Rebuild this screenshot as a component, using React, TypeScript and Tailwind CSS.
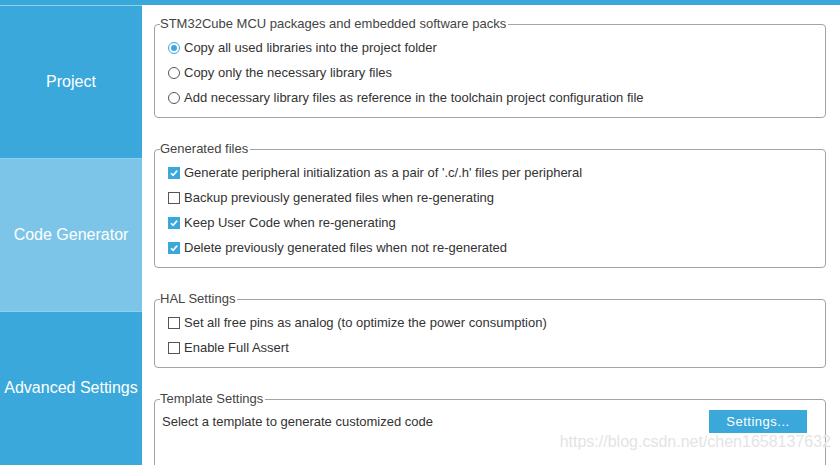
import React from "react";

const Radio = ({ checked }: { checked?: boolean }) => (
  <span
    className={`flex items-center justify-center w-[12px] h-[12px] rounded-full border bg-white ${
      checked ? "border-[#3aa8db]" : "border-[#555]"
    }`}
  >
    {checked && <span className="w-[6px] h-[6px] rounded-full bg-[#3aa8db]" />}
  </span>
);

const Check = ({ checked }: { checked?: boolean }) =>
  checked ? (
    <span className="flex items-center justify-center w-[12px] h-[12px] bg-[#3aa8db]">
      <svg width="10" height="10" viewBox="0 0 10 10">
        <path d="M2 5.2 L4.1 7.3 L8.2 2.6" fill="none" stroke="white" strokeWidth="1.6" />
      </svg>
    </span>
  ) : (
    <span className="w-[12px] h-[12px] border border-[#555] bg-white" />
  );

const Row = ({ control, label }: { control: React.ReactNode; label: string }) => (
  <div className="flex items-center h-[25px] pl-[8px] gap-[4px]">
    {control}
    <span>{label}</span>
  </div>
);

const Group = ({ title, children, last }: { title: string; children: React.ReactNode; last?: boolean }) => (
  <fieldset
    className={`border border-[#a3a3a3] rounded-[4px] pl-[5px] pr-0 pt-[3px] ${
      last ? "pb-[40px]" : "pb-[7px] mb-[23px]"
    }`}
  >
    <legend className="px-0 pr-[2px] text-[#444] leading-[16px]">{title}</legend>
    {children}
  </fieldset>
);

const Tab = ({ label, active }: { label: string; active?: boolean }) => (
  <div
    className={`flex items-center justify-center h-[153px] border-t border-[#8fd0ef] text-white text-[16px] ${
      active ? "bg-[#7cc5e8]" : "bg-[#3aa8db]"
    }`}
  >
    {label}
  </div>
);

export default function App() {
  return (
    <div
      className="relative w-[840px] h-[465px] overflow-hidden bg-white"
      style={{ fontFamily: '"Liberation Sans", Arial, sans-serif' }}
    >
      <div className="h-[5px] bg-[#3aa8db]" />
      <div className="flex h-[460px]">
        <div className="w-[142px] shrink-0 flex flex-col bg-[#3aa8db]">
          <Tab label="Project" />
          <Tab label="Code Generator" active />
          <Tab label="Advanced Settings" />
        </div>
        <div className="flex-1 pl-[12px] pr-[14px] pt-[11px] text-[13px] text-[#333]">
          <Group title="STM32Cube MCU packages and embedded software packs">
            <Row control={<Radio checked />} label="Copy all used libraries into the project folder" />
            <Row control={<Radio />} label="Copy only the necessary library files" />
            <Row
              control={<Radio />}
              label="Add necessary library files as reference in the toolchain project configuration file"
            />
          </Group>
          <Group title="Generated files">
            <Row control={<Check checked />} label="Generate peripheral initialization as a pair of '.c/.h' files per peripheral" />
            <Row control={<Check />} label="Backup previously generated files when re-generating" />
            <Row control={<Check checked />} label="Keep User Code when re-generating" />
            <Row control={<Check checked />} label="Delete previously generated files when not re-generated" />
          </Group>
          <Group title="HAL Settings">
            <Row control={<Check />} label="Set all free pins as analog (to optimize the power consumption)" />
            <Row control={<Check />} label="Enable Full Assert" />
          </Group>
          <Group title="Template Settings" last>
            <div className="flex items-center justify-between h-[25px] pl-[2px] pr-[18px] mt-[-1px]">
              <span>Select a template to generate customized code</span>
              <button className="w-[98px] h-[23px] bg-[#3aa8db] text-white text-[13px] tracking-[0.5px]">
                Settings...
              </button>
            </div>
          </Group>
        </div>
      </div>
      <div className="absolute right-[9px] bottom-[11px] text-[16px] text-[#e4e4e4] [text-shadow:0_0_1px_#fff]">
        https://blog.csdn.net/chen1658137632
      </div>
    </div>
  );
}
